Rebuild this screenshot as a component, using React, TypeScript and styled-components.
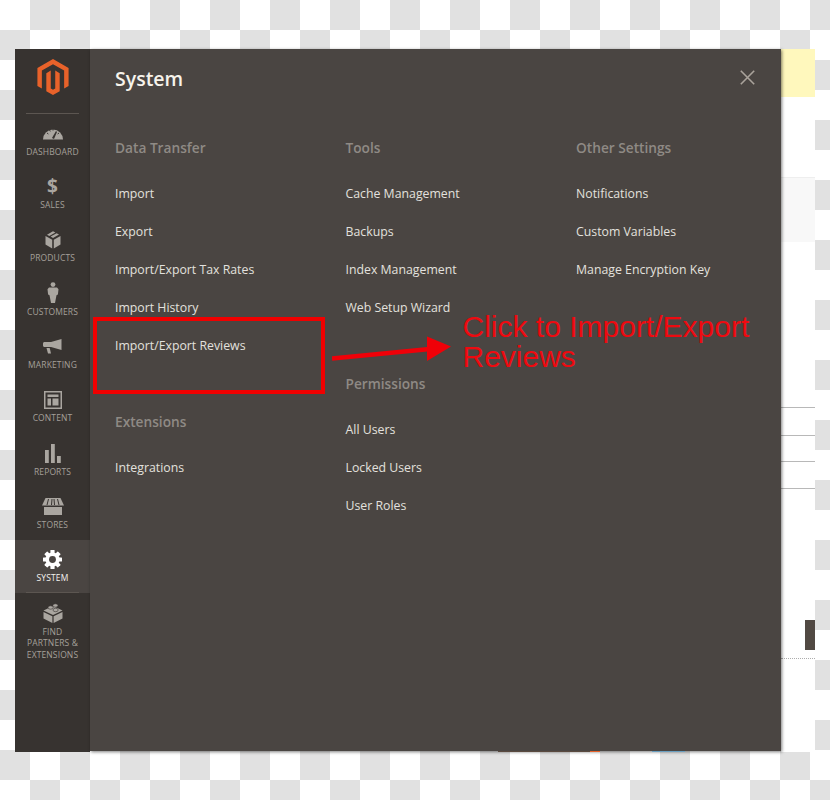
import styled, { createGlobalStyle } from "styled-components";
import { ReactNode } from "react";

const GlobalStyle = createGlobalStyle`
  html, body {
    margin: 0;
    padding: 0;
    background: #fff;
  }
  body {
    font-family: "Open Sans", "Liberation Sans", sans-serif;
  }
`;

const columns = [
  [
    {
      title: "Data Transfer",
      links: [
        "Import",
        "Export",
        "Import/Export Tax Rates",
        "Import History",
        "Import/Export Reviews",
      ],
    },
    { title: "Extensions", links: ["Integrations"] },
  ],
  [
    {
      title: "Tools",
      links: [
        "Cache Management",
        "Backups",
        "Index Management",
        "Web Setup Wizard",
      ],
    },
    { title: "Permissions", links: ["All Users", "Locked Users", "User Roles"] },
  ],
  [
    {
      title: "Other Settings",
      links: ["Notifications", "Custom Variables", "Manage Encryption Key"],
    },
  ],
];

export default function App() {
  const navItems: { label: ReactNode; icon: ReactNode; active?: boolean }[] = [
    { label: "Dashboard", icon: <GaugeIcon /> },
    { label: "Sales", icon: <Dollar>$</Dollar> },
    { label: "Products", icon: <BoxIcon /> },
    { label: "Customers", icon: <PersonIcon /> },
    { label: "Marketing", icon: <MegaphoneIcon /> },
    { label: "Content", icon: <ContentIcon /> },
    { label: "Reports", icon: <BarsIcon /> },
    { label: "Stores", icon: <StoreIcon /> },
    { label: "System", icon: <GearIcon />, active: true },
    {
      label: (
        <>
          Find
          <br />
          Partners &amp;
          <br />
          Extensions
        </>
      ),
      icon: <BrickIcon />,
    },
  ];

  return (
    <Stage>
      <GlobalStyle />
      <Window>
        <Sidebar>
          <LogoArea>
            <svg width="32" height="36" viewBox="1.6 0 20.8 24" fill="#e8622a">
              <path d="M12 24l-4.455-2.572v-12l2.97-1.715v12.001L12 20.572l1.485-.858V7.713l2.97 1.715v12L12 24zM22.391 6v12l-2.969 1.714V7.713L12 3.43 4.574 7.713v12L1.609 18V6L12 0l10.391 6z" />
            </svg>
          </LogoArea>
          <Divider />
          {navItems.map((item, i) => (
            <div key={i}>
              <NavItem $active={item.active}>
                <IconSlot>{item.icon}</IconSlot>
                <NavLabel $active={item.active}>{item.label}</NavLabel>
              </NavItem>
              {item.active && <Divider />}
            </div>
          ))}
        </Sidebar>

        <Panel>
          <PanelTitle>System</PanelTitle>
          <CloseButton>
            <svg width="15" height="15" viewBox="0 0 15 15" stroke="#aaa39b" strokeWidth="1.6">
              <path d="M.8.8l13.4 13.4M14.2.8L.8 14.2" />
            </svg>
          </CloseButton>
          <MenuGrid>
            {columns.map((sections, i) => (
              <MenuColumn key={i}>
                {sections.map((section) => (
                  <section key={section.title}>
                    <SectionTitle>{section.title}</SectionTitle>
                    <LinkList>
                      {section.links.map((link) => (
                        <MenuLink key={link}>{link}</MenuLink>
                      ))}
                    </LinkList>
                  </section>
                ))}
              </MenuColumn>
            ))}
          </MenuGrid>

          <RedBox />
          <Arrow width="122" height="28" viewBox="0 0 122 28">
            <path d="M0 22.5L98 13" stroke="#f00008" strokeWidth="4.5" />
            <path d="M95 .5L119 10.5L95 25z" fill="#f00008" />
          </Arrow>
          <Callout>
            Click to Import/Export
            <br />
            Reviews
          </Callout>
          <PeekRow>
            <PeekBar $width={92} $color="#5a4a3f" />
            <PeekBar $width={10} $color="#e8622a" />
            <PeekBar $width={33} $color="#6a9fc0" $gap={52} />
          </PeekRow>
        </Panel>

        <BackPage>
          <Notice />
          <Band />
          <TableLine $gap={166} />
          <TableLine $gap={28} />
          <TableLine $gap={26} />
          <TableLine $gap={27} />
          <DarkButton />
          <DottedLine />
        </BackPage>
      </Window>
    </Stage>
  );
}

function GaugeIcon() {
  return (
    <svg width="20" height="16" viewBox="0 0 20 16">
      <path d="M0 14.5a10 10 0 0 1 20 0z" fill="#aaa6a0" />
      <path d="M9 13l4-7 1 1-3 7z" fill="#373330" />
      <path d="M4 8l1.4 1M6.5 5l.8 1.4M10 4v1.5M16 8l-1.4 1" stroke="#373330" strokeWidth="1" />
    </svg>
  );
}

function BoxIcon() {
  return (
    <svg width="16" height="18" viewBox="0 0 16 18" fill="#aaa6a0">
      <path d="M8 .3l2.4 1.3-6.1 3.3L2 3.7z" />
      <path d="M11.6 2.2L14 3.6 8 7 5.6 5.6z" />
      <path d="M.5 5l6.7 3.8v8.6L.5 13.6z" />
      <path d="M15.5 5L8.8 8.8v8.6l6.7-3.8z" />
    </svg>
  );
}

function PersonIcon() {
  return (
    <svg width="12" height="22" viewBox="0 0 12 22" fill="#aaa6a0">
      <circle cx="6" cy="2.6" r="2.4" />
      <path d="M2 5.6h8l1.5 1.6-.6 5.4-1.4.6L8 21H4L2.5 13.2l-1.4-.6L.5 7.2z" />
    </svg>
  );
}

function MegaphoneIcon() {
  return (
    <svg width="19" height="15" viewBox="0 0 19 15" fill="#aaa6a0">
      <path d="M18.5 0v11L8 8H1.5C.7 8 0 7.3 0 6.5v-2C0 3.7.7 3 1.5 3H8z" />
      <path d="M3.5 9h3.2L8 14.5H5z" />
    </svg>
  );
}

function ContentIcon() {
  return (
    <svg width="18" height="18" viewBox="0 0 18 18" fill="#aaa6a0">
      <path
        fillRule="evenodd"
        d="M0 0h18v18H0zM1.5 1.5v15h15v-15zM3.5 3.5h11V6h-11zM3.5 7.5H7v7H3.5zM8.5 7.5h6v7h-6z"
      />
    </svg>
  );
}

function BarsIcon() {
  return (
    <svg width="16" height="19" viewBox="0 0 16 19" fill="#aaa6a0">
      <rect x="0" y="6" width="3.8" height="13" />
      <rect x="6" y="0" width="3.8" height="19" />
      <rect x="12" y="12" width="3.8" height="7" />
    </svg>
  );
}

function StoreIcon() {
  return (
    <svg width="22" height="17" viewBox="0 0 22 17" fill="#aaa6a0">
      <path d="M3.5 0h15L22 7.5H0z" />
      <path d="M2 9h18v8H2z" />
      <path d="M6.5 1L5 7M10 1l-.5 6M12 1l.5 6M15.5 1L17 7" stroke="#373330" strokeWidth="1" />
    </svg>
  );
}

function GearIcon() {
  return (
    <svg width="19" height="19" viewBox="0 0 20 20">
      <g fill="#fff">
        <circle cx="10" cy="10" r="7.5" />
        <rect x="7.8" y="0" width="4.4" height="20" rx=".6" />
        <rect x="7.8" y="0" width="4.4" height="20" rx=".6" transform="rotate(45 10 10)" />
        <rect x="7.8" y="0" width="4.4" height="20" rx=".6" transform="rotate(90 10 10)" />
        <rect x="7.8" y="0" width="4.4" height="20" rx=".6" transform="rotate(135 10 10)" />
      </g>
      <circle cx="10" cy="10" r="3.6" fill="#4a4542" />
    </svg>
  );
}

function BrickIcon() {
  return (
    <svg width="20" height="20" viewBox="0 0 20 20" fill="#aaa6a0">
      <path d="M10 3l9.5 4.5L10 12 .5 7.5z" />
      <path d="M.5 9l8.9 4.2V20L.5 15.5z" />
      <path d="M19.5 9l-8.9 4.2V20l8.9-4.5z" />
      <ellipse cx="7.6" cy="4.5" rx="2.6" ry="1.7" stroke="#373330" strokeWidth=".6" />
      <ellipse cx="12.4" cy="2.5" rx="2.6" ry="1.7" stroke="#373330" strokeWidth=".6" />
      <ellipse cx="12.6" cy="7" rx="2.6" ry="1.7" stroke="#373330" strokeWidth=".6" />
    </svg>
  );
}

const Stage = styled.div`
  box-sizing: border-box;
  width: 830px;
  height: 800px;
  padding: 49px 15px 48px;
  overflow: hidden;
  background: conic-gradient(#e1e1e1 25%, #fff 0 50%, #e1e1e1 0 75%, #fff 0) 0 0 / 60px 60px;
`;

const Window = styled.div`
  display: flex;
  height: 703px;
`;

const Sidebar = styled.aside`
  display: flex;
  flex-direction: column;
  flex: 0 0 75px;
  background: #373330;
`;

const LogoArea = styled.div`
  display: flex;
  justify-content: center;
  align-items: flex-start;
  height: 64px;
  padding-top: 10px;
  box-sizing: border-box;
`;

const Divider = styled.div`
  height: 1px;
  margin: -0.5px 11px;
  background: #5c5651;
`;

const NavItem = styled.div<{ $active?: boolean }>`
  display: flex;
  flex-direction: column;
  align-items: center;
  box-sizing: border-box;
  min-height: 53.33px;
  padding-top: 9.6px;
  background: ${(p) => (p.$active ? "#4a4542" : "transparent")};
`;

const IconSlot = styled.div`
  display: flex;
  justify-content: center;
  align-items: center;
  height: 21px;
  margin-bottom: 2px;
`;

const Dollar = styled.span`
  font-size: 19px;
  font-weight: 700;
  line-height: 21px;
  color: #aaa6a0;
`;

const NavLabel = styled.div<{ $active?: boolean }>`
  font-size: 8.5px;
  line-height: 11.5px;
  text-align: center;
  text-transform: uppercase;
  letter-spacing: 0.12px;
  color: ${(p) => (p.$active ? "#f4f2ef" : "#a5a09a")};
`;

const Panel = styled.main`
  position: relative;
  z-index: 1;
  flex: 0 0 691px;
  box-sizing: border-box;
  height: 702px;
  padding: 15px 0 0 25px;
  background: #4a4542;
  box-shadow: 1px 1px 3px rgba(0, 0, 0, 0.5);
`;

const PanelTitle = styled.h1`
  margin: 0;
  font-size: 19.5px;
  font-weight: 600;
  line-height: 30px;
  color: #f7f3eb;
`;

const CloseButton = styled.div`
  position: absolute;
  top: 19px;
  right: 26px;
  width: 15px;
  height: 15px;
`;

const MenuGrid = styled.div`
  display: grid;
  grid-template-columns: 230.5px 230.5px 1fr;
  margin-top: 44px;
`;

const MenuColumn = styled.div`
  display: flex;
  flex-direction: column;
  gap: 56px;
`;

const SectionTitle = styled.h2`
  margin: 0 0 26px;
  font-size: 13.7px;
  font-weight: 600;
  line-height: 20px;
  color: #8f8a85;
`;

const LinkList = styled.div`
  display: flex;
  flex-direction: column;
  gap: 18px;
`;

const MenuLink = styled.a`
  font-size: 12.3px;
  line-height: 20px;
  color: #e3e1de;
`;

const RedBox = styled.div`
  position: absolute;
  left: 3px;
  top: 268px;
  width: 232px;
  height: 77px;
  box-sizing: border-box;
  border: 4px solid #f00000;
`;

const Arrow = styled.svg`
  position: absolute;
  left: 242px;
  top: 287px;
`;

const Callout = styled.div`
  position: absolute;
  left: 372.5px;
  top: 263px;
  font-family: "Liberation Sans", Arial, sans-serif;
  font-size: 30px;
  line-height: 30px;
  white-space: nowrap;
  color: #ee0a10;
`;

const PeekRow = styled.div`
  position: absolute;
  top: 100%;
  left: 408px;
  display: flex;
`;

const PeekBar = styled.div<{ $width: number; $color: string; $gap?: number }>`
  width: ${(p) => p.$width}px;
  height: 1px;
  margin-left: ${(p) => p.$gap ?? 0}px;
  background: ${(p) => p.$color};
`;

const BackPage = styled.div`
  display: flex;
  flex-direction: column;
  flex: 0 0 34px;
  height: 703px;
  background: #fff;
`;

const Notice = styled.div`
  height: 48px;
  background: #fff8bd;
`;

const Band = styled.div`
  height: 65px;
  margin-top: 80px;
  border-top: 1px solid #eeeeee;
  box-sizing: border-box;
  background: #f8f8f8;
`;

const TableLine = styled.div<{ $gap: number }>`
  height: 1px;
  margin-top: ${(p) => p.$gap - 1}px;
  background: #b8b8b8;
`;

const DarkButton = styled.div`
  align-self: flex-end;
  width: 10px;
  height: 30px;
  margin-top: 131px;
  background: #514943;
`;

const DottedLine = styled.div`
  margin-top: 8px;
  border-top: 1px dotted #adadad;
`;
